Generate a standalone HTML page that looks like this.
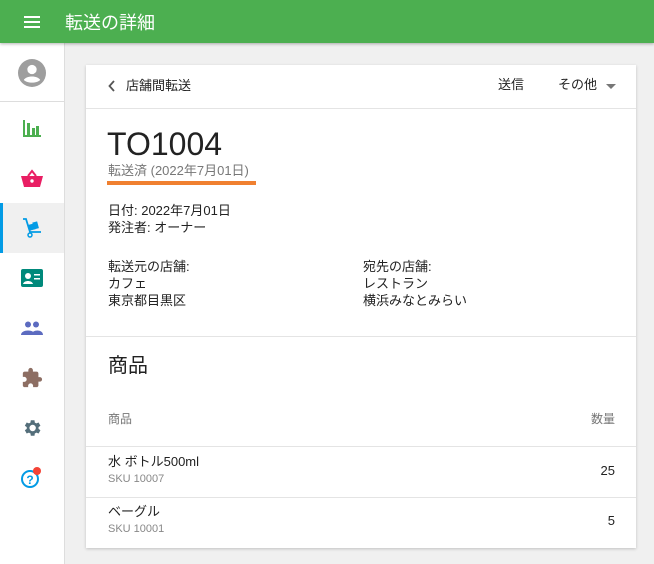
<!DOCTYPE html><html><head><meta charset="utf-8"><style>
*{margin:0;padding:0;box-sizing:border-box}
body{width:654px;height:564px;background:#f0f0f0;font-family:"Liberation Sans","Noto Sans CJK JP",sans-serif;color:#222;position:relative;overflow:hidden}
.top{position:absolute;left:0;top:0;width:654px;height:43px;background:#4caf50;box-shadow:0 1px 3px rgba(0,0,0,.3);z-index:2}
.top .t{position:absolute;left:65px;top:9px;color:#fff;font-size:18px}
.side{position:absolute;left:0;top:43px;width:65px;height:521px;background:#fff;border-right:1px solid #ddd}
.ic{position:absolute;left:0;width:64px;height:50px;display:flex;align-items:center;justify-content:center}
.card{position:absolute;left:86px;top:65px;width:550px;height:483px;background:#fff;box-shadow:0 1px 3px rgba(0,0,0,.2)}
.a{position:absolute;font-size:13px;white-space:nowrap;line-height:17px}
.hr{position:absolute;left:0;width:550px;height:1px;background:#e4e4e4}
</style></head><body>
<div class="top"><svg style="position:absolute;left:24px;top:15px" width="16" height="14"><rect y="1" width="16" height="2" fill="#fff"/><rect y="6" width="16" height="2" fill="#fff"/><rect y="11" width="16" height="2" fill="#fff"/></svg><div class="t">転送の詳細</div></div>
<div class="side">
<div class="ic" style="top:3px;height:53px"><svg width="28" height="28" viewBox="0 0 24 24"><circle cx="12" cy="12" r="12" fill="#9e9e9e"/><circle cx="12" cy="9" r="4" fill="#fff"/><path d="M5 18c2-4 12-4 14 0c-3 3-11 3-14 0z" fill="#fff"/></svg></div>
<div style="position:absolute;left:0;top:58px;width:64px;height:1px;background:#ddd"></div>
<div class="ic" style="top:60px"><svg width="20" height="20"><path d="M2 2v16h17" stroke="#4caf50" stroke-width="2" fill="none"/><rect x="5" y="5" width="3" height="12" fill="#4caf50"/><rect x="10" y="10" width="3" height="7" fill="#4caf50"/><rect x="14" y="8" width="3" height="9" fill="#4caf50"/></svg></div>
<div class="ic" style="top:110px"><svg width="22" height="18"><path d="M7 7l4-5 4 5" stroke="#e91e63" stroke-width="2" fill="none"/><path d="M0 7h22l-3 11H3z" fill="#e91e63"/><circle cx="11" cy="12" r="1.7" fill="#fff"/></svg></div>
<div class="ic" style="top:160px;background:#f0f0f0"><div style="position:absolute;left:0;top:0;width:3px;height:50px;background:#039be5"></div><svg width="22" height="22"><path d="M2 2h3l4 13h11" stroke="#039be5" stroke-width="1.8" fill="none"/><rect x="8" y="7" width="6" height="6" fill="#039be5" transform="rotate(-15 11 10)"/><rect x="12" y="5" width="5" height="7" fill="#039be5" transform="rotate(-15 14 8)"/><circle cx="9" cy="18" r="2" stroke="#039be5" fill="none" stroke-width="1.5"/></svg></div>
<div class="ic" style="top:210px"><svg width="22" height="18"><rect width="22" height="18" rx="2" fill="#00897b"/><circle cx="7" cy="7" r="3" fill="#fff"/><path d="M2 15c1-4 9-4 10 0z" fill="#fff"/><rect x="13" y="5" width="6" height="1.5" fill="#fff"/><rect x="13" y="9" width="6" height="1.5" fill="#fff"/></svg></div>
<div class="ic" style="top:260px"><svg width="22" height="14"><circle cx="7" cy="3.5" r="3" fill="#5c6bc0"/><circle cx="15" cy="3.5" r="3" fill="#5c6bc0"/><path d="M0 14c0-6 14-6 14 0zM10 14c1-6 12-6 12 0z" fill="#5c6bc0"/></svg></div>
<div class="ic" style="top:310px"><svg width="22" height="22" viewBox="0 0 24 24"><path d="M20.5 11H19V7c0-1.1-.9-2-2-2h-4V3.5a2.5 2.5 0 0 0-5 0V5H4c-1.1 0-2 .9-2 2v3.8h1.5c1.5 0 2.7 1.2 2.7 2.7S5 16.2 3.5 16.2H2V20c0 1.1.9 2 2 2h3.8v-1.5c0-1.5 1.2-2.7 2.7-2.7s2.7 1.2 2.7 2.7V22H17c1.1 0 2-.9 2-2v-4h1.5a2.5 2.5 0 0 0 0-5z" fill="#8d6e63"/></svg></div>
<div class="ic" style="top:360px"><svg width="22" height="22" viewBox="0 0 24 24"><path d="M19.1 12.9a7 7 0 0 0 0-1.8l2.1-1.6-2-3.5-2.5 1a7 7 0 0 0-1.6-.9L14.7 3.5h-4l-.4 2.6a7 7 0 0 0-1.6.9l-2.5-1-2 3.5 2.1 1.6a7 7 0 0 0 0 1.8l-2.1 1.6 2 3.5 2.5-1a7 7 0 0 0 1.6.9l.4 2.6h4l.4-2.6a7 7 0 0 0 1.6-.9l2.5 1 2-3.5zM12.7 15.5a3.5 3.5 0 1 1 0-7 3.5 3.5 0 0 1 0 7z" fill="#546e7a"/></svg></div>
<div class="ic" style="top:410px"><svg width="24" height="24"><circle cx="10" cy="13" r="8" stroke="#039be5" stroke-width="2" fill="none"/><text x="10" y="18" font-size="12" font-weight="bold" fill="#039be5" text-anchor="middle" font-family="Liberation Sans">?</text><circle cx="17" cy="5" r="4" fill="#f44336"/></svg></div>
</div>
<div class="card">
<svg style="position:absolute;left:22px;top:15px" width="8" height="12"><path d="M6 1L1.5 6 6 11" stroke="#555" stroke-width="1.8" fill="none"/></svg>
<div class="a" style="left:40px;top:12px">店舗間転送</div>
<div class="a" style="left:412px;top:11px">送信</div>
<div class="a" style="left:472px;top:11px">その他</div>
<svg style="position:absolute;left:520px;top:19px" width="10" height="6"><path d="M0 0h10L5 5z" fill="#777"/></svg>
<div class="hr" style="top:43px"></div>
<div class="a" style="left:21px;top:61px;font-size:32px;line-height:36px">TO1004</div>
<div class="a" style="left:22px;top:97px;color:#777">転送済 (2022年7月01日)</div>
<div style="position:absolute;left:21px;top:116px;width:149px;height:4px;background:#f08030"></div>
<div class="a" style="left:22px;top:137px">日付: 2022年7月01日</div>
<div class="a" style="left:22px;top:154px">発注者: オーナー</div>
<div class="a" style="left:22px;top:193px">転送元の店舗:</div>
<div class="a" style="left:22px;top:210px">カフェ</div>
<div class="a" style="left:22px;top:227px">東京都目黒区</div>
<div class="a" style="left:277px;top:193px">宛先の店舗:</div>
<div class="a" style="left:277px;top:210px">レストラン</div>
<div class="a" style="left:277px;top:227px">横浜みなとみらい</div>
<div class="hr" style="top:271px"></div>
<div class="a" style="left:22px;top:289px;font-size:20px;line-height:24px">商品</div>
<div class="a" style="left:22px;top:346px;color:#777;font-size:12px">商品</div>
<div class="a" style="right:21px;top:346px;color:#777;font-size:12px">数量</div>
<div class="hr" style="top:381px"></div>
<div class="a" style="left:22px;top:388px">水 ボトル500ml</div>
<div class="a" style="left:22px;top:406px;color:#888;font-size:11px">SKU 10007</div>
<div class="a" style="right:21px;top:397px">25</div>
<div class="hr" style="top:432px"></div>
<div class="a" style="left:22px;top:438px">ベーグル</div>
<div class="a" style="left:22px;top:456px;color:#888;font-size:11px">SKU 10001</div>
<div class="a" style="right:21px;top:447px">5</div>
</div>
</body></html>
